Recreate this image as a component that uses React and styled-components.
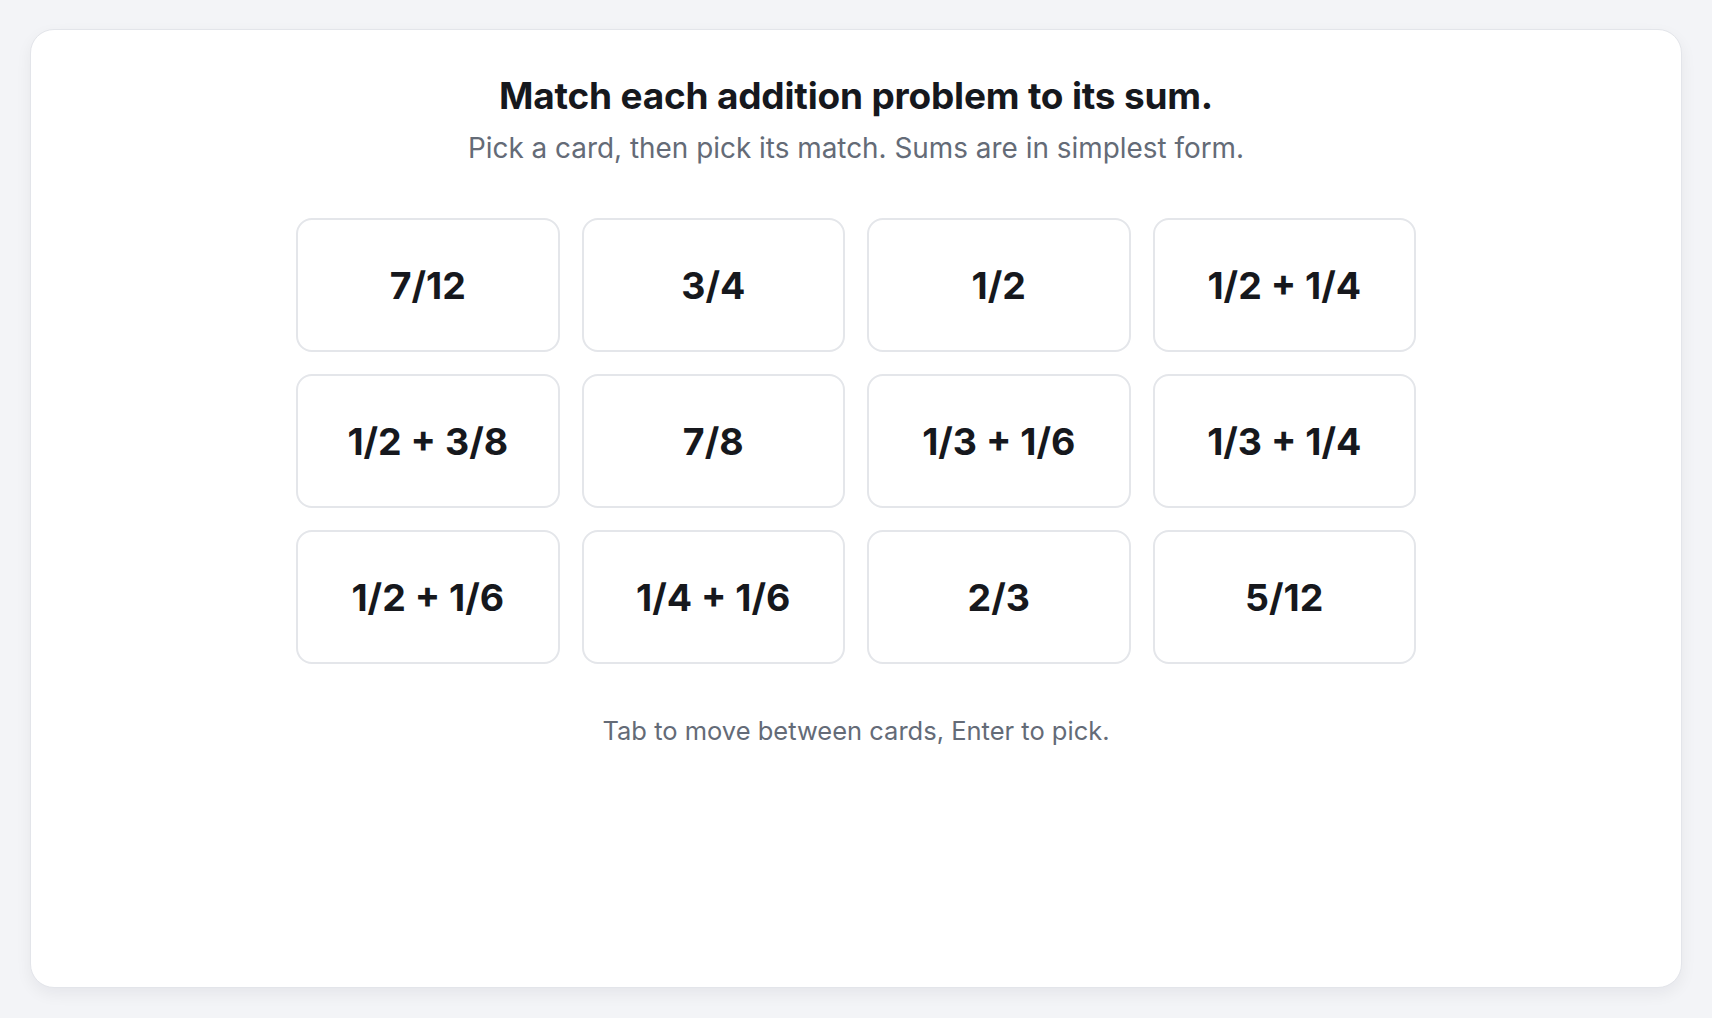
import React from "react";
import styled, { createGlobalStyle } from "styled-components";

const Global = createGlobalStyle`
  * { box-sizing: border-box; }
  html, body { margin: 0; padding: 0; }
  body {
    background: #f3f4f7;
    font-family: Inter, "Noto Sans", "Liberation Sans", sans-serif;
    -webkit-font-smoothing: antialiased;
  }
`;

const Page = styled.div`
  padding: 29px 30px 30px;
  min-height: 100vh;
  display: flex;
`;

const Panel = styled.main`
  flex: 1;
  background: #ffffff;
  border: 1px solid #e3e5ea;
  border-radius: 24px;
  box-shadow: 0 6px 16px rgba(17, 24, 39, 0.06);
  padding: 44px 40px 40px;
  display: flex;
  flex-direction: column;
  align-items: center;
`;

const Title = styled.h1`
  margin: 0;
  font-size: 37px;
  line-height: 44px;
  font-weight: 700;
  color: #16181d;
  letter-spacing: -0.2px;
`;

const Subtitle = styled.p`
  margin: 12px 0 0;
  font-size: 27.9px;
  line-height: 36px;
  font-weight: 400;
  color: #646b77;
`;

const Grid = styled.div`
  margin-top: 52px;
  width: 1120px;
  display: grid;
  grid-template-columns: repeat(4, 1fr);
  gap: 22px;
`;

const Card = styled.button`
  height: 134px;
  background: #ffffff;
  border: 2px solid #e4e6ea;
  border-radius: 16px;
  font-family: inherit;
  font-size: 37.5px;
  font-weight: 700;
  color: #16181d;
  display: flex;
  align-items: center;
  justify-content: center;
  cursor: pointer;
  padding: 0;
`;

const Hint = styled.p`
  margin: 50px 0 0;
  font-size: 25.5px;
  line-height: 34px;
  color: #646b77;
`;

const cards = [
  "7/12", "3/4", "1/2", "1/2 + 1/4",
  "1/2 + 3/8", "7/8", "1/3 + 1/6", "1/3 + 1/4",
  "1/2 + 1/6", "1/4 + 1/6", "2/3", "5/12",
];

export default function App() {
  return (
    <>
      <Global />
      <Page>
        <Panel>
          <Title>Match each addition problem to its sum.</Title>
          <Subtitle>Pick a card, then pick its match. Sums are in simplest form.</Subtitle>
          <Grid>
            {cards.map((c) => (
              <Card key={c}>{c}</Card>
            ))}
          </Grid>
          <Hint>Tab to move between cards, Enter to pick.</Hint>
        </Panel>
      </Page>
    </>
  );
}
